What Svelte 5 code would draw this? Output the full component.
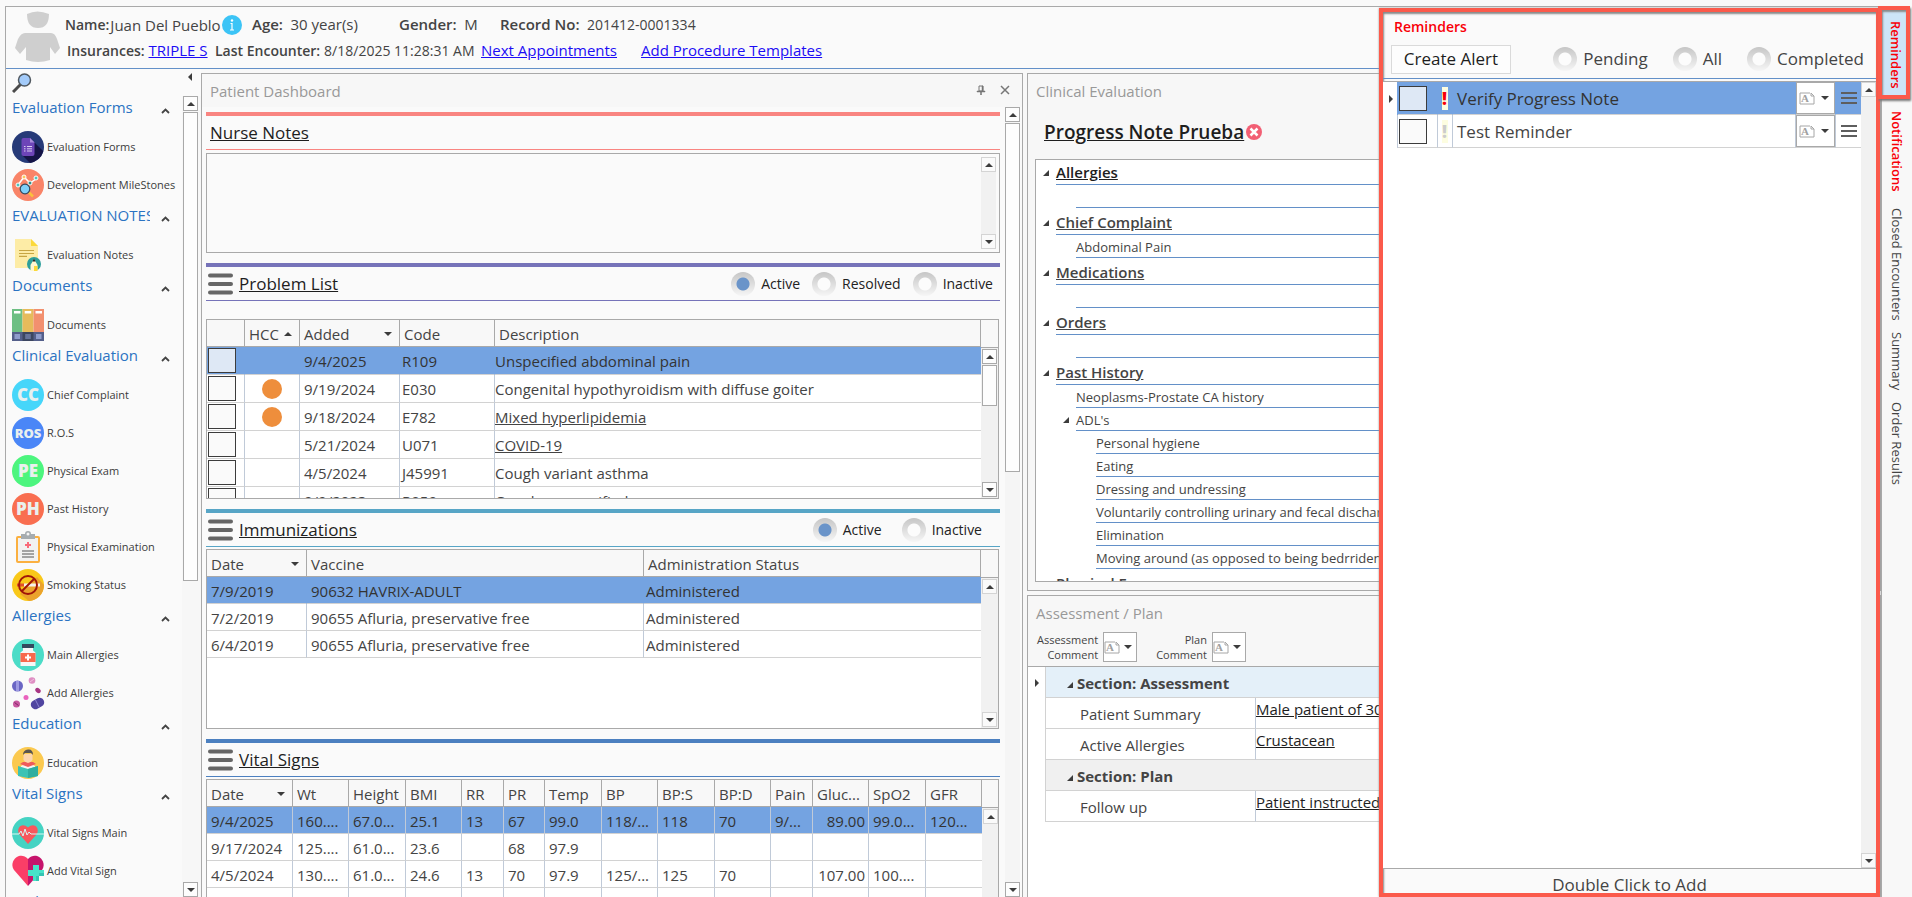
<script lang="ts">
  /**
   * Patient chart - header, form navigation, dashboard, clinical note
   * and the reminders drawer that slides over the note.
   */

  type NavItem = { icon: string; label: string };
  type NavGroup = { title: string; items: NavItem[] };

  const navGroups: NavGroup[] = [
    {
      title: "Evaluation Forms",
      items: [
        { icon: "forms", label: "Evaluation Forms" },
        { icon: "milestones", label: "Development MileStones" },
      ],
    },
    {
      title: "EVALUATION NOTES",
      items: [{ icon: "notes", label: "Evaluation Notes" }],
    },
    { title: "Documents", items: [{ icon: "documents", label: "Documents" }] },
    {
      title: "Clinical Evaluation",
      items: [
        { icon: "CC", label: "Chief Complaint" },
        { icon: "ROS", label: "R.O.S" },
        { icon: "PE", label: "Physical Exam" },
        { icon: "PH", label: "Past History" },
        { icon: "clipboard", label: "Physical Examination" },
        { icon: "smoking", label: "Smoking Status" },
      ],
    },
    {
      title: "Allergies",
      items: [
        { icon: "bottle", label: "Main Allergies" },
        { icon: "pills", label: "Add Allergies" },
      ],
    },
    { title: "Education", items: [{ icon: "education", label: "Education" }] },
    {
      title: "Vital Signs",
      items: [
        { icon: "vitals", label: "Vital Signs Main" },
        { icon: "addvital", label: "Add Vital Sign" },
      ],
    },
    { title: "Orders", items: [] },
  ];

  const badgeColors: Record<string, string> = {
    CC: "#46d6fa",
    ROS: "#4a86f7",
    PE: "#4cf57e",
    PH: "#f96e50",
  };

  const problems = [
    { added: "9/4/2025", code: "R109", text: "Unspecified abdominal pain", hcc: false, linked: false },
    { added: "9/19/2024", code: "E030", text: "Congenital hypothyroidism with diffuse goiter", hcc: true, linked: false },
    { added: "9/18/2024", code: "E782", text: "Mixed hyperlipidemia", hcc: true, linked: true },
    { added: "5/21/2024", code: "U071", text: "COVID-19", hcc: false, linked: true },
    { added: "4/5/2024", code: "J45991", text: "Cough variant asthma", hcc: false, linked: false },
    { added: "9/9/2023", code: "R059", text: "Cough, unspecified", hcc: false, linked: false },
  ];

  const immunizations = [
    ["7/9/2019", "90632 HAVRIX-ADULT", "Administered"],
    ["7/2/2019", "90655 Afluria, preservative free", "Administered"],
    ["6/4/2019", "90655 Afluria, preservative free", "Administered"],
  ];

  const vitalColumns = [
    { label: "Date", width: 86 },
    { label: "Wt", width: 56 },
    { label: "Height", width: 57 },
    { label: "BMI", width: 56 },
    { label: "RR", width: 42 },
    { label: "PR", width: 41 },
    { label: "Temp", width: 57 },
    { label: "BP", width: 56 },
    { label: "BP:S", width: 57 },
    { label: "BP:D", width: 56 },
    { label: "Pain", width: 42 },
    { label: "Gluc...", width: 56 },
    { label: "SpO2", width: 57 },
    { label: "GFR", width: 56 },
  ];

  const vitals = [
    ["9/4/2025", "160....", "67.0...", "25.1", "13", "67", "99.0", "118/...", "118", "70", "9/...", "89.00", "99.0...", "120..."],
    ["9/17/2024", "125....", "61.0...", "23.6", "", "68", "97.9", "", "", "", "", "", "", ""],
    ["4/5/2024", "130....", "61.0...", "24.6", "13", "70", "97.9", "125/...", "125", "70", "", "107.00", "100....", ""],
    ["", "", "", "", "", "", "", "", "", "", "", "", "", ""],
  ];

  const adls = [
    "Personal hygiene",
    "Eating",
    "Dressing and undressing",
    "Voluntarily controlling urinary and fecal discharge",
    "Elimination",
    "Moving around (as opposed to being bedrriden)",
  ];

  const noteSections = [
    { title: "Allergies", lines: [""] },
    { title: "Chief Complaint", lines: ["Abdominal Pain"] },
    { title: "Medications", lines: [""] },
    { title: "Orders", lines: [""] },
    { title: "Past History", lines: ["Neoplasms-Prostate CA history"], group: "ADL's", nested: adls },
    { title: "Physical Exam", lines: [] },
  ];

  const reminders = [
    { text: "Verify Progress Note", urgent: true },
    { text: "Test Reminder", urgent: false },
  ];

  let problemFilter = $state("Active");
  let immunizationFilter = $state("Active");
  let reminderFilter = $state("");
</script>

{#snippet icon(name: string)}
  <svg class="nav-icon" viewBox="0 0 32 32" aria-hidden="true">
    {#if name in badgeColors}
      <circle cx="16" cy="16" r="16" fill={badgeColors[name]} />
      <text
        x="16"
        y={name === "ROS" ? 21 : 22}
        text-anchor="middle"
        class="badge-text"
        font-size={name === "ROS" ? 13 : 17}>{name}</text
      >
    {:else if name === "forms"}
      <circle cx="16" cy="16" r="16" fill="#263a78" />
      <path d="M22 11l9.300 9.300A16 16 0 0 1 18 31.900L10 24z" fill="#151446" />
      <path d="M9.500 9q0-2 2-2H18l4.500 4.500V23q0 2-2 2h-9q-2 0-2-2z" fill="#6d45b8" />
      <path d="M18 7l4.500 4.500H18z" fill="#a98ddb" />
      <path d="M12 15.500h1.500M15 15.500h5M12 17.800h1.500M15 17.800h5M12 20h1.500M15 20h5" stroke="#d9cdf0" stroke-width="1" />
    {:else if name === "milestones"}
      <circle cx="16" cy="16" r="16" fill="#f98468" />
      <path d="M6 16l6-8 6 6 6-4" fill="none" stroke="#fff" stroke-width="1.500" />
      <circle cx="6" cy="16" r="2" fill="#4dc4bc" stroke="#fff" stroke-width="1" />
      <circle cx="12" cy="8" r="2" fill="#fbc95c" stroke="#fff" stroke-width="1" />
      <circle cx="18" cy="14" r="2" fill="#2f8f88" stroke="#fff" stroke-width="1" />
      <circle cx="24" cy="9" r="2" fill="#4dc4bc" stroke="#fff" stroke-width="1" />
      <path d="M17 23.500l4 4" stroke="#fbc13c" stroke-width="2.500" />
      <circle cx="13" cy="20" r="4.800" fill="#7fd0fa" stroke="#34495e" stroke-width="1.200" />
    {:else if name === "notes"}
      <path d="M3 0h16l7 7v22H3z" fill="#fdeca6" />
      <path d="M19 0l7 7h-7z" fill="#fbd93b" />
      <path d="M7 11.500h15M7 14.500h15M7 17.300h8" stroke="#c7a643" stroke-width="1.200" />
      <circle cx="22" cy="25" r="7" fill="#2d9f9b" />
      <path d="M18.500 32v-6l3.500-6 3.500 6v6z" fill="#fff7d0" />
      <path d="M20.500 22.500L22 19.500l1.500 3z" fill="#232323" />
      <path d="M22 27h3.500v5H22z" fill="#fbd93b" />
    {:else if name === "documents"}
      <path d="M0 0h10.500v23H0z" fill="#6dbf83" />
      <path d="M10.500 0h11v23h-11z" fill="#e6bb5b" />
      <path d="M21.500 0H32v23H21.500z" fill="#f2906f" />
      <path d="M0 23h32v9H0z" fill="#545f8a" />
      <path d="M10.500 23h11v9h-11z" fill="#3c4660" />
      <path d="M2.500 25h5.500v5H2.500zM24 25h5.500v5H24z" fill="#8f9ccb" />
      <path d="M13.200 25h5.600v5h-5.600z" fill="#66739a" />
      <path d="M2 2h6.500v2.500H2zM12.700 2h6.500v2.500h-6.500zM23.500 2H30v2.500h-6.500z" fill="#fff" />
    {:else if name === "clipboard"}
      <rect x="5" y="6" width="22" height="25" rx="1" fill="#f2f2f2" stroke="#fbb040" stroke-width="2" />
      <path d="M9 3h4a3 3 0 0 1 6 0h4v5H9z" fill="#a6acb0" />
      <circle cx="16" cy="3" r="1.500" fill="#f5f5f5" />
      <path d="M16 11v6M13 14h6" stroke="#f96b7b" stroke-width="2" />
      <path d="M10 20h12M10 23h12M10 26h12" stroke="#555" stroke-width="1.200" />
    {:else if name === "smoking"}
      <circle cx="16" cy="16" r="16" fill="#f9c819" />
      <path d="M25 8l7 8a16 16 0 0 1-15 16l-9-7z" fill="#eba32c" />
      <path d="M12 14.500h16v3H12z" fill="#f7f2ee" />
      <path d="M5 14.500h7v3H5z" fill="#e2502a" />
      <circle cx="16" cy="16" r="9" fill="none" stroke="#a01509" stroke-width="2" />
      <path d="M22.500 9.500l-13 13" stroke="#a01509" stroke-width="2" />
    {:else if name === "bottle"}
      <circle cx="16" cy="16" r="16" fill="#4bdcc7" />
      <path d="M10 5h12v4H10z" fill="#34495e" />
      <path d="M11 9h10v2.500l2.500 2V27h-15V13.500l2.500-2z" fill="#f7f7f7" />
      <path d="M8.500 14h15v9h-15z" fill="#f8694d" />
      <path d="M16 15.500v6M13 18.500h6" stroke="#fff" stroke-width="2" />
    {:else if name === "pills"}
      <circle cx="5.500" cy="9" r="5.500" fill="#6a66c4" />
      <path d="M5.500 4v10" stroke="#9d9ae2" stroke-width="3" />
      <circle cx="20" cy="3.500" r="3.300" fill="#df8ec3" />
      <path d="M18 5l4-3" stroke="#efc0df" stroke-width="1" />
      <ellipse cx="26" cy="13.500" rx="3" ry="2.200" fill="#a83683" transform="rotate(40 26 13.500)" />
      <circle cx="14" cy="20.500" r="2.500" fill="#ea62bd" />
      <circle cx="4.500" cy="27" r="3.500" fill="#c6579f" />
      <path d="M2.500 25.500l4 3" stroke="#7e2464" stroke-width="1" />
      <rect x="18.500" y="22" width="14" height="9" rx="4.500" fill="#5045a0" transform="rotate(-28 25.500 26.500)" />
      <path d="M23.500 23l3.500 7" stroke="#8a82d0" stroke-width="1" />
    {:else if name === "education"}
      <circle cx="16" cy="16" r="16" fill="#fbc94f" />
      <path d="M9 19q7-5 14 0v4H9z" fill="#f4f4f4" />
      <path d="M8 17l8 3 8-3-3-2H11z" fill="#ef5b5b" />
      <path d="M11.500 7h9v6q-4.500 6-9 0z" fill="#fcd5ae" />
      <path d="M11 8q0-5 5-5.500Q21 2 21 8l-2-2h-6z" fill="#5a5550" />
      <path d="M6 19l10 3 10-3v10l-10 2-10-2z" fill="#3cc3b4" />
      <path d="M16 22l10-3v10l-10 2z" fill="#2fae9f" />
    {:else if name === "vitals"}
      <circle cx="16" cy="16" r="16" fill="#45d3c3" />
      <path d="M16 27L7.500 17.500C3.500 12 9.500 4.500 16 10.500 22.500 4.500 28.500 12 24.500 17.500z" fill="#f9575c" />
      <path d="M0 17h7l2-3 2 5 2-7 2 6 2-3 2 2h13" fill="none" stroke="#d9f6f2" stroke-width="1" />
    {:else}
      <path d="M16 31L2 15C-4 6 8-5 16 4z" fill="#fa3e67" />
      <path d="M16 31l14-16C36 6 24-5 16 4z" fill="#c6146c" />
      <path d="M21 10h6v5h5v6h-5v5h-6v-5h-5v-6h5z" fill="#47e3c9" />
      <path d="M24 21h8v-3h-5v8h-3z" fill="#35c4b3" />
    {/if}
  </svg>
{/snippet}

{#snippet triangle(dir: string)}
  <svg class="triangle" viewBox="0 0 8 8" aria-hidden="true">
    {#if dir === "up"}
      <path d="M0 6h8L4 2z" />
    {:else if dir === "down"}
      <path d="M0 2h8L4 6z" />
    {:else if dir === "left"}
      <path d="M6 0v8L2 4z" />
    {:else if dir === "right"}
      <path d="M2 0v8l4-4z" />
    {:else}
      <path d="M7 1v6H1z" />
    {/if}
  </svg>
{/snippet}

{#snippet scrollbar(thumb: number)}
  <div class="scrollbar" class:idle={thumb === 0}>
    <button type="button" aria-label="Scroll up">{@render triangle("up")}</button>
    <div class="track">
      {#if thumb > 0}
        <div class="thumb" style="height: {thumb}%"></div>
      {/if}
    </div>
    <button type="button" aria-label="Scroll down">{@render triangle("down")}</button>
  </div>
{/snippet}

{#snippet commentButton(label: string)}
  <button type="button" class="comment-btn" aria-label={label}>
    <svg viewBox="0 0 16 13" aria-hidden="true">
      <path d="M11 1H1v11h14V4h-3V1l3 3" fill="none" stroke="#a6a6a6" />
      <text x="6" y="10" text-anchor="middle" class="comment-glyph">A</text>
    </svg>
    {@render triangle("down")}
  </button>
{/snippet}

{#snippet hamburger()}
  <svg class="hamburger" viewBox="0 0 25 22" aria-hidden="true">
    <path d="M2 2.500h21M2 11h21M2 19.500h21" stroke="#666" stroke-width="4" stroke-linecap="round" />
  </svg>
{/snippet}

<div class="shell">
  <main class="chart">
    <header class="patient">
      <svg class="avatar" viewBox="0 0 45 51" aria-hidden="true">
        <path d="M12 3Q22 -2 34 3 34 17 23 17 12 17 12 3z" fill="#cfcfcf" />
        <path d="M10 22h26q4 0 6 6l3 9-5 6-5-7v13q-12 4-24 0V36l-6 7-5-6 3-9q3-6 7-6z" fill="#cfcfcf" />
      </svg>
      <div class="patient-info">
        <div class="info-row info-main">
          <span class="name-field">
            <b>Name:</b>Juan Del Pueblo
            <svg class="info-icon" viewBox="0 0 20 20" aria-hidden="true">
              <circle cx="10" cy="10" r="10" fill="#3cc4f6" />
              <circle cx="10" cy="5.500" r="1.200" fill="#fff" />
              <path d="M8.500 8.500H10V15M8 15h4" fill="none" stroke="#fff" stroke-width="1.200" />
            </svg>
          </span>
          <span><b>Age:</b>&ensp;30 year(s)</span>
          <span><b>Gender:</b>&ensp;M</span>
          <span><b>Record No:</b>&ensp;<span class="value-sm">201412-0001334</span></span>
        </div>
        <div class="info-row info-visit">
          <span><b>Insurances:</b> <a href="#insurance">TRIPLE S</a></span>
          <span><b>Last Encounter:</b> <time class="value-sm">8/18/2025 11:28:31 AM</time></span>
          <a href="#appointments">Next Appointments</a>
          <a href="#templates">Add Procedure Templates</a>
        </div>
      </div>
    </header>

    <div class="workspace">
      <nav class="sidebar">
        <div class="sidebar-tools">
          <button type="button" class="plain" aria-label="Search">
            <svg class="search-icon" viewBox="0 0 20 20" aria-hidden="true">
              <path d="M1 19l8-8" stroke="#4a4a4a" stroke-width="3" />
              <circle cx="12.500" cy="7" r="6" fill="#a3cbfa" stroke="#50585f" stroke-width="1.500" />
            </svg>
          </button>
          <button type="button" class="plain" aria-label="Collapse">{@render triangle("left")}</button>
        </div>
        <div class="sidebar-body">
          <div class="nav-groups">
            {#each navGroups as group}
              <section>
                <h2>
                  <span>{group.title}</span>
                  <svg class="chevron" viewBox="0 0 9 6" aria-hidden="true">
                    <path d="M1 5l3.500-3.500L8 5" fill="none" stroke="#444" stroke-width="1.800" />
                  </svg>
                </h2>
                {#each group.items as item}
                  <a class="nav-item" href="#{item.icon}">
                    {@render icon(item.icon)}
                    <span>{item.label}</span>
                  </a>
                {/each}
              </section>
            {/each}
          </div>
          {@render scrollbar(61)}
        </div>
      </nav>

      <section class="panel dashboard">
        <div class="panel-title">
          <span>Patient Dashboard</span>
          <span class="panel-actions">
            <button type="button" class="plain" aria-label="Pin">
              <svg viewBox="0 0 10 10" aria-hidden="true">
                <path d="M3 1h4v5H3z" fill="none" stroke="#777" />
                <path d="M6 1h1v5H6zM1 6h8v1H1zM4.500 7h1v3h-1z" fill="#777" stroke="#777" stroke-width="0.500" />
              </svg>
            </button>
            <button type="button" class="plain" aria-label="Close">
              <svg viewBox="0 0 10 10" aria-hidden="true">
                <path d="M1 1l8 8M9 1L1 9" stroke="#777" stroke-width="1.500" />
              </svg>
            </button>
          </span>
        </div>
        <div class="dashboard-body">
          <div class="cards">
            <section class="card nurse">
              <div class="card-head"><a href="#nurse-notes">Nurse Notes</a></div>
              <div class="notes-box">
                <textarea aria-label="Nurse Notes"></textarea>
                {@render scrollbar(0)}
              </div>
            </section>

            <section class="card problems">
              <div class="card-head">
                {@render hamburger()}
                <a href="#problem-list">Problem List</a>
                <div class="filters">
                  {#each ["Active", "Resolved", "Inactive"] as option}
                    <label><input type="radio" value={option} bind:group={problemFilter} />{option}</label>
                  {/each}
                </div>
              </div>
              <div class="grid">
                <table>
                  <colgroup>
                    <col style="width: 38px" />
                    <col style="width: 55px" />
                    <col style="width: 100px" />
                    <col style="width: 95px" />
                    <col />
                  </colgroup>
                  <thead>
                    <tr>
                      <th></th>
                      <th><span class="sort">HCC {@render triangle("up")}</span></th>
                      <th><span class="sort">Added {@render triangle("down")}</span></th>
                      <th>Code</th>
                      <th>Description</th>
                    </tr>
                  </thead>
                  <tbody>
                    {#each problems as row, i}
                      <tr class:selected={i === 0}>
                        <td class="check"><input type="checkbox" aria-label={row.text} /></td>
                        <td class="hcc">{#if row.hcc}<span class="dot"></span>{/if}</td>
                        <td>{row.added}</td>
                        <td class="tight">{row.code}</td>
                        <td class="flush" class:linked={row.linked}>{row.text}</td>
                      </tr>
                    {/each}
                  </tbody>
                </table>
                <div class="rail">{@render scrollbar(35)}</div>
              </div>
            </section>

            <section class="card immunizations">
              <div class="card-head">
                {@render hamburger()}
                <a href="#immunizations">Immunizations</a>
                <div class="filters roomy">
                  {#each ["Active", "Inactive"] as option}
                    <label><input type="radio" value={option} bind:group={immunizationFilter} />{option}</label>
                  {/each}
                </div>
              </div>
              <div class="grid">
                <table>
                  <colgroup>
                    <col style="width: 100px" />
                    <col />
                    <col />
                  </colgroup>
                  <thead>
                    <tr>
                      <th><span class="sort">Date {@render triangle("down")}</span></th>
                      <th>Vaccine</th>
                      <th>Administration Status</th>
                    </tr>
                  </thead>
                  <tbody>
                    {#each immunizations as row, i}
                      <tr class:selected={i === 0}>
                        <td>{row[0]}</td>
                        <td>{row[1]}</td>
                        <td class="tight">{row[2]}</td>
                      </tr>
                    {/each}
                  </tbody>
                </table>
                <div class="rail">{@render scrollbar(0)}</div>
              </div>
            </section>

            <section class="card vitals">
              <div class="card-head">
                {@render hamburger()}
                <a href="#vital-signs">Vital Signs</a>
              </div>
              <div class="grid">
                <table>
                  <colgroup>
                    {#each vitalColumns as col}
                      <col style="width: {col.width}px" />
                    {/each}
                  </colgroup>
                  <thead>
                    <tr>
                      {#each vitalColumns as col, i}
                        <th>
                          {#if i === 0}
                            <span class="sort">{col.label} {@render triangle("down")}</span>
                          {:else}
                            {col.label}
                          {/if}
                        </th>
                      {/each}
                    </tr>
                  </thead>
                  <tbody>
                    {#each vitals as row, i}
                      <tr class:selected={i === 0}>
                        {#each row as value, c}
                          <td class:number={c === 11}>{value}</td>
                        {/each}
                      </tr>
                    {/each}
                  </tbody>
                </table>
                <div class="rail">{@render scrollbar(0)}</div>
              </div>
            </section>
          </div>
          {@render scrollbar(46)}
        </div>
      </section>

      <div class="note-column">
        <section class="panel clinical">
          <div class="panel-title">Clinical Evaluation</div>
          <div class="note-title">
            <a href="#progress-note">Progress Note Prueba</a>
            <button type="button" class="plain" aria-label="Remove note">
              <svg viewBox="0 0 16 16" aria-hidden="true">
                <circle cx="8" cy="8" r="8" fill="#f25f74" />
                <path d="M4.500 4.500l7 7M11.500 4.500l-7 7" stroke="#fff" stroke-width="2.500" />
              </svg>
            </button>
          </div>
          <ul class="tree">
            {#each noteSections as section, i}
              <li>
                <div class="tree-head" class:current={i === 0}>
                  {@render triangle("corner")}
                  <span>{section.title}</span>
                </div>
                {#each section.lines as line}
                  <div class="tree-line"><span>{line}</span></div>
                {/each}
                {#if section.group}
                  <div class="tree-line tree-group">
                    {@render triangle("corner")}
                    <span>{section.group}</span>
                  </div>
                  {#each section.nested as line}
                    <div class="tree-line deep"><span>{line}</span></div>
                  {/each}
                {/if}
              </li>
            {/each}
          </ul>
        </section>

        <section class="panel assessment">
          <div class="panel-title">Assessment / Plan</div>
          <div class="comments">
            <span>Assessment<br />Comment</span>
            {@render commentButton("Assessment Comment")}
            <span class="plan-label">Plan<br />Comment</span>
            {@render commentButton("Plan Comment")}
          </div>
          <div class="plan-grid">
            <div class="plan-gutter">{@render triangle("right")}</div>
            <table>
              <colgroup>
                <col style="width: 30px" />
                <col style="width: 179px" />
                <col />
              </colgroup>
              <tbody>
                <tr class="group active">
                  <th colspan="3">{@render triangle("corner")}Section: Assessment</th>
                </tr>
                <tr><td class="indent"></td><td>Patient Summary</td><td class="value">Male patient of 30 years of age</td></tr>
                <tr><td class="indent"></td><td>Active Allergies</td><td class="value">Crustacean</td></tr>
                <tr class="group">
                  <th colspan="3">{@render triangle("corner")}Section: Plan</th>
                </tr>
                <tr><td class="indent"></td><td>Follow up</td><td class="value">Patient instructed to return</td></tr>
              </tbody>
            </table>
          </div>
        </section>
      </div>
    </div>

    <aside class="drawer">
      <h2>Reminders</h2>
      <div class="drawer-tools">
        <button type="button" class="create">Create Alert</button>
        <div class="filters">
          {#each ["Pending", "All", "Completed"] as option}
            <label><input type="radio" value={option} bind:group={reminderFilter} />{option}</label>
          {/each}
        </div>
      </div>
      <div class="drawer-grid">
        <table>
          <colgroup>
            <col style="width: 15px" />
            <col style="width: 40px" />
            <col style="width: 15px" />
            <col />
            <col style="width: 40px" />
            <col style="width: 25px" />
          </colgroup>
          <tbody>
            {#each reminders as row, i}
              <tr class:selected={i === 0}>
                <td class="marker">{#if i === 0}{@render triangle("right")}{/if}</td>
                <td class="check"><input type="checkbox" aria-label={row.text} /></td>
                <td class="flag" class:urgent={row.urgent}><span>!</span></td>
                <td class="reminder">{row.text}</td>
                <td class="comment-cell">{@render commentButton("Comment")}</td>
                <td class="menu">
                  <button type="button" class="plain" aria-label="Menu">
                    <svg viewBox="0 0 16 14" aria-hidden="true">
                      <path d="M0 2h16M0 7h16M0 12h16" stroke="#5e5e5e" stroke-width="2" />
                    </svg>
                  </button>
                </td>
              </tr>
            {/each}
          </tbody>
        </table>
        {@render scrollbar(0)}
      </div>
      <button type="button" class="drawer-footer">Double Click to Add</button>
    </aside>
  </main>

  <div class="tabs">
    <button type="button" class="tab active">Reminders</button>
    <button type="button" class="tab alert">Notifications</button>
    <button type="button" class="tab">Closed Encounters</button>
    <button type="button" class="tab">Summary</button>
    <button type="button" class="tab">Order Results</button>
  </div>
</div>

<style>
  :global(body) {
    background: #f9f9f9;
  }

  .shell {
    --line: #a9a9a9;
    --row-line: #d2d2d2;
    --col-line: #c0cad8;
    --accent: #6390c8;
    --selected: #74a3e1;
    --alert: #fb5a4b;
    --alert-text: #f90008;
    display: flex;
    height: 100vh;
    box-sizing: border-box;
    padding: 6px 0 0 5px;
    overflow: hidden;
    font-family: "Open Sans", "Noto Sans", sans-serif;
    font-size: 15px;
    line-height: 20px;
    color: #444;
  }

  .shell :global(*) {
    box-sizing: border-box;
  }

  button,
  input,
  textarea {
    font: inherit;
    color: inherit;
    margin: 0;
  }

  button {
    cursor: pointer;
  }

  svg {
    display: block;
    flex: none;
  }

  h2,
  ul {
    margin: 0;
    padding: 0;
    font-size: 15px;
    font-weight: 400;
    list-style: none;
  }

  .plain {
    display: flex;
    padding: 0;
    border: none;
    background: none;
  }

  .triangle {
    width: 8px;
    height: 8px;
    fill: #3c3c3c;
  }

  .chart {
    position: relative;
    flex: 1;
    min-width: 0;
    display: flex;
    flex-direction: column;
    border: 1px solid var(--line);
    border-width: 1px 0 0 1px;
    background: #f8f8f8;
  }

  /* Patient header */
  .patient {
    flex: none;
    display: flex;
    gap: 5px;
    height: 62px;
    padding: 4px 9px;
    border-bottom: 1px solid var(--accent);
    background: #fafafa;
  }

  .avatar {
    width: 45px;
    height: 51px;
  }

  .patient-info {
    white-space: nowrap;
  }

  .patient-info b {
    font-weight: 600;
  }

  .info-visit b,
  .name-field b,
  .value-sm {
    font-size: 14px;
  }

  .info-row {
    display: grid;
    height: 26px;
    line-height: 26px;
  }

  .info-row a {
    color: #1c0cf5;
  }

  .info-main {
    grid-template-columns: 187px 147px 101px auto;
  }

  .info-visit {
    grid-template-columns: 148px 266px 160px auto;
    padding-left: 2px;
  }

  .name-field {
    display: flex;
    align-items: center;
    gap: 1px;
  }

  .info-icon {
    width: 20px;
    height: 20px;
  }

  .workspace {
    flex: 1;
    min-height: 0;
    display: grid;
    grid-template-columns: 195px minmax(0, 822fr) minmax(0, 858fr);
  }

  /* Scrollbars */
  .scrollbar {
    flex: none;
    display: flex;
    flex-direction: column;
    gap: 1px;
    width: 15px;
    background: #f1f1f1;
  }

  .scrollbar button {
    flex: none;
    display: flex;
    align-items: center;
    justify-content: center;
    width: 15px;
    height: 15px;
    padding: 0;
    border: 1px solid var(--line);
    background: #fdfdfd;
  }

  .scrollbar.idle button {
    border-color: #d4d4d4;
    background: #fafafa;
  }

  .track {
    flex: 1;
    min-height: 0;
  }

  .thumb {
    border: 1px solid var(--line);
    background: #fdfdfd;
  }

  /* Sidebar */
  .sidebar {
    display: flex;
    flex-direction: column;
    min-height: 0;
    background: #fafafa;
  }

  .sidebar-tools {
    display: flex;
    justify-content: space-between;
    padding: 4px 7px 3px 6px;
    height: 27px;
  }

  .search-icon {
    width: 20px;
    height: 20px;
  }

  .sidebar-body {
    flex: 1;
    min-height: 0;
    display: flex;
    padding-right: 3px;
    background: linear-gradient(90deg, #fafafa 176px, #f7f7f7 176px);
  }

  .sidebar-body > .scrollbar {
    background: #f7f7f7;
  }

  .nav-groups {
    flex: 1;
    min-width: 0;
    overflow: hidden;
    padding-left: 6px;
  }

  .nav-groups h2 {
    display: flex;
    height: 32px;
    line-height: 22px;
    color: #2b73c2;
    white-space: nowrap;
  }

  .nav-groups h2 span {
    width: 138px;
    overflow: hidden;
  }

  .chevron {
    width: 9px;
    height: 6px;
    margin: 12px 0 0 11px;
  }

  .nav-item {
    display: flex;
    align-items: center;
    gap: 3px;
    height: 38px;
    font-size: 11px;
    line-height: 18px;
    color: #3c3c3c;
    text-decoration: none;
    white-space: nowrap;
  }

  .nav-icon {
    width: 32px;
    height: 32px;
    overflow: visible;
  }

  .badge-text {
    font-family: "Open Sans", sans-serif;
    font-weight: 800;
    fill: #e9f0ee;
  }

  /* Panels */
  .panel {
    border: 1px solid var(--line);
    background: #f7f7f7;
  }

  .panel-title {
    display: flex;
    justify-content: space-between;
    padding: 0 8px;
    height: 33px;
    line-height: 34px;
    color: #999;
  }

  .panel-actions {
    display: flex;
    gap: 14px;
    padding: 11px 4px 0 0;
  }

  .panel-actions svg {
    width: 10px;
    height: 10px;
  }

  .dashboard {
    display: flex;
    flex-direction: column;
    min-height: 0;
    margin-top: 4px;
    border-bottom: none;
    overflow: hidden;
  }

  .dashboard-body {
    flex: 1;
    min-height: 0;
    display: flex;
    gap: 5px;
    padding: 0 2px 0 4px;
    background: #fafafa;
  }

  .dashboard-body > .scrollbar {
    background: #f5f5f5;
  }

  .cards {
    flex: 1;
    min-width: 0;
    display: flex;
    flex-direction: column;
    gap: 10px;
    padding-top: 5px;
    overflow: hidden;
  }

  .card {
    --card: #f98581;
    flex: none;
  }

  .card.problems {
    --card: #7673b9;
  }

  .card.immunizations {
    --card: #57a5c6;
  }

  .card.vitals {
    --card: #4c80c0;
  }

  .card-head {
    display: flex;
    align-items: center;
    height: 38px;
    padding-left: 2px;
    border-top: 4px solid var(--card);
    border-bottom: 1px solid var(--card);
  }

  .card-head a {
    margin-left: 6px;
    font-size: 17px;
    line-height: 24px;
    color: #1e1e1e;
  }

  .nurse .card-head a {
    margin-left: 2px;
  }

  .hamburger {
    width: 25px;
    height: 22px;
  }

  .notes-box {
    display: flex;
    height: 100px;
    margin-top: 3px;
    padding: 3px;
    border: 1px solid var(--line);
  }

  .notes-box textarea {
    flex: 1;
    border: none;
    background: none;
    resize: none;
  }

  .filters {
    display: flex;
    gap: 12px;
    margin-left: auto;
    padding-right: 7px;
    font-size: 14px;
    color: #222;
  }

  .filters.roomy {
    gap: 20px;
    padding-right: 18px;
  }

  .filters label {
    display: flex;
    align-items: center;
    gap: 6px;
  }

  .filters input {
    appearance: none;
    width: 24px;
    height: 24px;
    border-radius: 50%;
    background:
      radial-gradient(circle, #fcfcfc 6px, transparent 7px),
      linear-gradient(#c6c6c6, #f6f6f6);
  }

  .filters input:checked {
    background:
      radial-gradient(circle, #6a94c9 6px, transparent 7px),
      linear-gradient(#c6c6c6, #f6f6f6);
  }

  /* Grids */
  .grid {
    display: flex;
    align-items: flex-start;
    height: 180px;
    margin: 2px 1px 0 0;
    border: 1px solid var(--line);
    background: #fff;
    overflow: hidden;
  }

  .problems .grid {
    margin-top: 18px;
  }

  table {
    flex: 1;
    width: 100%;
    min-width: 0;
    table-layout: fixed;
    border-collapse: separate;
    border-spacing: 0;
  }

  th,
  td {
    padding: 0 4px;
    text-align: left;
    font-weight: 400;
    white-space: nowrap;
    overflow: hidden;
  }

  .grid th {
    height: 27px;
    padding-top: 1px;
    border-right: 1px solid var(--line);
    border-bottom: 1px solid var(--line);
    background: #f8f8f8;
  }

  .grid td {
    height: 27px;
    border-right: 1px solid var(--col-line);
    border-bottom: 1px solid var(--row-line);
  }

  .immunizations td,
  .vitals td {
    padding-top: 2px;
  }

  .problems td {
    height: 28px;
  }

  .grid td:last-child {
    border-right: none;
  }

  .selected td {
    background: var(--selected);
    color: #333;
  }

  .problems .selected td,
  .immunizations .selected td {
    border-right-color: var(--selected);
  }

  .grid td.tight {
    padding-left: 2px;
  }

  .grid td.flush {
    padding-left: 0;
  }

  .grid td.number {
    text-align: right;
    padding-right: 3px;
  }

  .linked {
    text-decoration: underline;
  }

  .sort {
    display: flex;
    align-items: center;
    justify-content: space-between;
    padding-right: 3px;
  }

  td.check {
    padding: 0 0 0 1px;
  }

  td.check input {
    display: block;
    appearance: none;
    width: 28px;
    height: 25px;
    border: 1px solid #3c3c3c;
    background: #fafafa;
  }

  .selected td.check input {
    background: #dee8f5;
  }

  .dot {
    display: block;
    width: 20px;
    height: 20px;
    margin: 0 auto;
    border-radius: 50%;
    background: #ee8e3c;
  }

  .rail {
    display: flex;
    width: 17px;
    height: 100%;
    padding: 0 1px 1px;
    flex-direction: column;
    background: #f1f1f1;
  }

  .rail::before {
    content: "";
    flex: none;
    height: 27px;
    margin: 0 -1px 1px;
    border-bottom: 1px solid var(--line);
    background: #f8f8f8;
  }

  .rail .scrollbar {
    flex: 1;
  }

  /* Clinical note */
  .note-column {
    display: flex;
    flex-direction: column;
    gap: 4px;
    min-height: 0;
    padding: 4px 0 0 4px;
  }

  .clinical {
    flex: none;
    display: flex;
    flex-direction: column;
    height: 518px;
    padding-bottom: 8px;
  }

  .note-title {
    flex: none;
    display: flex;
    align-items: center;
    gap: 2px;
    height: 52px;
    padding: 0 0 2px 16px;
  }

  .note-title a {
    font-size: 19px;
    line-height: 24px;
    font-weight: 600;
    color: #1e1e1e;
  }

  .note-title svg {
    width: 16px;
    height: 16px;
  }

  .tree {
    flex: 1;
    min-height: 0;
    margin-left: 7px;
    padding-left: 6px;
    border: 1px solid var(--line);
    background: #fff;
    overflow: hidden;
    white-space: nowrap;
  }

  .tree li + li {
    margin-top: 2px;
  }

  .tree-head,
  .tree-line {
    display: flex;
    align-items: center;
    gap: 6px;
  }

  .tree-head span,
  .tree-line span {
    flex: 1;
    border-bottom: 1px solid var(--accent);
  }

  .tree-head span {
    height: 25px;
    line-height: 25px;
    font-weight: 600;
    text-decoration: underline;
  }

  .tree-head.current span {
    color: #1e1e1e;
  }

  .tree-line {
    padding-left: 34px;
    font-size: 13px;
  }

  .tree-line span {
    height: 23px;
    line-height: 24px;
  }

  .tree-group {
    padding-left: 20px;
  }

  .tree-line.deep {
    padding-left: 54px;
  }

  /* Assessment and plan */
  .assessment {
    flex: 1;
    min-height: 0;
    display: flex;
    flex-direction: column;
    border-bottom: none;
  }

  .comments {
    flex: none;
    display: flex;
    align-items: center;
    gap: 5px;
    height: 37px;
    padding: 0 0 1px 9px;
    font-size: 11px;
    line-height: 15px;
    text-align: right;
  }

  .plan-label {
    margin-left: 14px;
  }

  .comment-btn {
    display: flex;
    align-items: center;
    justify-content: space-between;
    width: 34px;
    height: 30px;
    padding: 0 4px 0 0;
    border: 1px solid var(--line);
    background: #fff;
  }

  .comment-btn > svg:first-child {
    width: 16px;
    height: 13px;
  }

  .comment-glyph {
    font: bold 11px "Liberation Serif", serif;
    fill: #a0a0a0;
  }

  .plan-grid {
    flex: 1;
    display: flex;
    align-items: flex-start;
    border-top: 1px solid var(--line);
    background: #fff;
  }

  .plan-gutter {
    width: 17px;
    padding: 12px 0 0 5px;
    align-self: stretch;
  }

  .plan-grid table {
    border-left: 1px solid var(--row-line);
  }

  .plan-grid th,
  .plan-grid td {
    height: 31px;
    padding-top: 2px;
    border-bottom: 1px solid var(--row-line);
  }

  .plan-grid .group th {
    padding-left: 20px;
    font-weight: 700;
    background: #f0f0f0;
  }

  .plan-grid .group.active th {
    background: #e4f0f9;
  }

  .group .triangle {
    display: inline-block;
    margin-right: 3px;
  }

  .plan-grid td.value {
    padding: 1px 0 0;
    border-left: 1px solid var(--col-line);
    vertical-align: top;
    color: #1e1e1e;
    text-decoration: underline;
  }

  /* Reminders drawer, lies over the note */
  .drawer {
    position: absolute;
    top: 1px;
    right: 1px;
    bottom: 0;
    width: 501px;
    display: flex;
    flex-direction: column;
    border: 4px solid var(--alert);
    background: #fafafa;
    box-shadow:
      0 0 2px #999,
      inset 1px 2px 2px #888;
  }

  .drawer h2 {
    height: 29px;
    padding-left: 11px;
    line-height: 30px;
    font-size: 14px;
    font-weight: 600;
    color: var(--alert-text);
  }

  .drawer-tools {
    display: flex;
    align-items: center;
    height: 38px;
    padding: 0 12px 1px 8px;
    border-bottom: 1px solid var(--accent);
  }

  .create {
    width: 120px;
    height: 29px;
    padding: 0;
    border: 1px solid #dadada;
    background: #fdfdfd;
    font-size: 17px;
    color: #1e1e1e;
  }

  .drawer-tools .filters {
    gap: 25px;
    padding: 0;
    font-size: 17px;
    color: #444;
  }

  .drawer-grid {
    flex: 1;
    min-height: 0;
    display: flex;
    align-items: flex-start;
    margin-top: 2px;
    border: 1px solid var(--line);
    border-width: 1px 0;
    background: #fff;
  }

  .drawer-grid .scrollbar {
    align-self: stretch;
  }

  .drawer-grid td {
    height: 33px;
    border-right: 1px solid var(--col-line);
    border-bottom: 1px solid var(--row-line);
  }

  .drawer-grid .selected td {
    border-right-color: var(--selected);
  }

  .drawer-grid td.marker {
    padding: 0 4px;
    border-bottom: none;
    background: #fff;
  }

  .drawer-grid td.flag {
    padding: 0;
  }

  .flag span {
    display: block;
    width: 6px;
    margin: 0 auto;
    background: #fdfde0;
    font-size: 17px;
    line-height: 23px;
    font-weight: 800;
    text-align: center;
    text-indent: -1px;
    color: #ccc;
  }

  .flag.urgent span {
    color: var(--alert-text);
  }

  .drawer-grid td.reminder {
    padding-top: 1px;
    font-size: 17px;
  }

  .drawer-grid td.comment-cell {
    padding: 0;
  }

  .comment-cell .comment-btn {
    width: 39px;
    height: 32px;
    padding: 0 5px 0 2px;
  }

  .drawer-grid td.menu {
    padding: 0 5px;
    border-right: none;
  }

  .menu svg {
    width: 16px;
    height: 14px;
  }

  .drawer-footer {
    height: 24px;
    padding: 8px 0 0;
    border: none;
    background: none;
    font-size: 17px;
    line-height: 16px;
  }

  /* Side tabs */
  .tabs {
    flex: none;
    position: relative;
    display: flex;
    flex-direction: column;
    gap: 12px;
    width: 31px;
    border-left: 1px solid var(--line);
    background: #f8f8f8;
  }

  .tab {
    padding: 0;
    border: none;
    background: none;
    font-size: 13px;
    line-height: 30px;
    writing-mode: vertical-rl;
    text-align: left;
  }

  .tab.alert {
    padding-bottom: 4px;
    font-weight: 600;
    color: var(--alert-text);
  }

  .tab.active {
    width: 32px;
    height: 93px;
    margin-left: -4px;
    padding: 11px 0 0 4px;
    border: 4px solid var(--alert);
    background: #cde5f8;
    box-shadow:
      1px 2px 2px #777,
      inset 1px 2px 2px #888;
    line-height: 20px;
    font-weight: 600;
    color: var(--alert-text);
  }
</style>
